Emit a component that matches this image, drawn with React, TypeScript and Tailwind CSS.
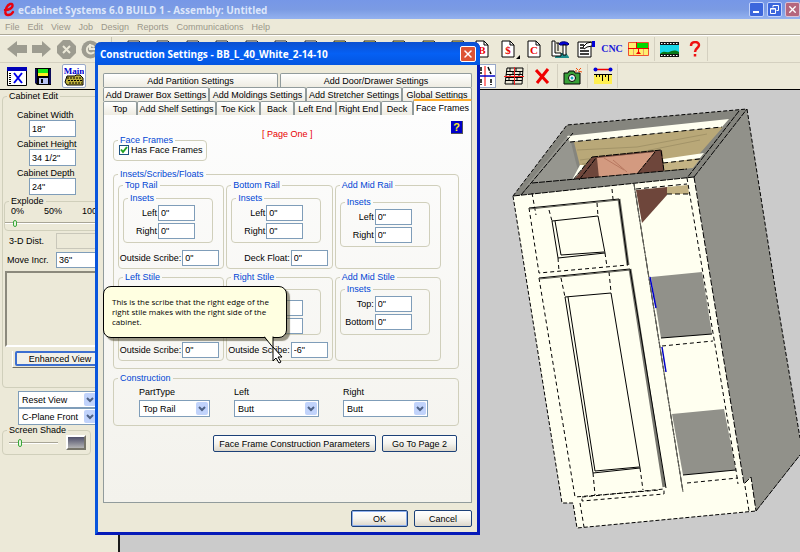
import React from 'react';
import { X } from 'lucide-react';

type GroupProps = {
  title?: string;
  className?: string;
  blue?: boolean;
  children?: React.ReactNode;
};

const Group = ({ title, className = '', blue = true, children }: GroupProps) => (
  <fieldset className={`min-w-0 rounded border border-[#d0cfbb] ${className}`}>
    {title && <legend className={`ml-1 px-0.5 leading-[10px] ${blue ? 'text-[#0046d5]' : 'text-black'}`}>{title}</legend>}
    {children}
  </fieldset>
);

type FieldProps = { label?: string; value: string; id: string; className?: string };

const Field = ({ label, value, id, className = '' }: FieldProps) => (
  <div className={`flex items-center justify-end gap-px ${className}`}>
    {label && <label htmlFor={id} className="whitespace-nowrap">{label}</label>}
    <input
      id={id}
      aria-label={label ? undefined : 'Inset'}
      defaultValue={value}
      className="h-4 w-[37px] shrink-0 border border-[#7f9db9] bg-white px-0.5 outline-none"
    />
  </div>
);

type FrameGroupProps = {
  title: string;
  id: string;
  labels?: [string, string];
  scribe?: string;
  scribeValue?: string;
  insetClass: string;
  scribeClass?: string;
};

const FrameGroup = ({ title, id, labels, scribe, scribeValue = '0"', insetClass, scribeClass = '' }: FrameGroupProps) => (
  <Group title={title} className="h-[89px]">
    <Group title={labels && 'Insets'} className={`ml-1 w-[90px] ${insetClass}`}>
      <div className="flex flex-col gap-0.5 pr-[17px] pt-0.5">
        <Field label={labels?.[0]} value={labels ? '0"' : ''} id={`${id}-a`} />
        <Field label={labels?.[1]} value={labels ? '0"' : ''} id={`${id}-b`} />
      </div>
    </Group>
    {scribe && <Field label={scribe} value={scribeValue} id={`${id}-scribe`} className={`pr-1 ${scribeClass}`} />}
  </Group>
);

type DropDownProps = { label: string; value: string; className: string; hideLabel?: boolean };

const DropDown = ({ label, value, className, hideLabel }: DropDownProps) => (
  <label className={`block ${className}`}>
    {!hideLabel && <span className="mb-[3px] block">{label}</span>}
    <span className="relative block">
      <select
        aria-label={label}
        defaultValue={value}
        className="block h-[17px] w-full appearance-none border border-[#7f9db9] bg-white px-[3px] outline-none"
      >
        <option>{value}</option>
      </select>
      <span className="pointer-events-none absolute inset-y-0.5 right-0.5 flex w-3 items-center justify-center rounded-xs bg-[#c1d3fb]">
        <svg width="8" height="6" viewBox="0 0 8 6" fill="none" stroke="#4d6185" strokeWidth="2">
          <path d="M1 1l3 3 3-3" />
        </svg>
      </span>
    </span>
  </label>
);

const PushButton = ({ className = '', children }: { className?: string; children: React.ReactNode }) => (
  <button
    type="button"
    className={`h-[17px] rounded-xs border border-[#1c4178] bg-linear-to-b from-white via-[#f5f4ef] to-[#dcd7cb] text-center ${className}`}
  >
    {children}
  </button>
);

const ToolButton = ({ label, className = '', children }: { label: string; className?: string; children: React.ReactNode }) => (
  <button type="button" aria-label={label} className={`flex h-6 shrink-0 items-center justify-center ${className}`}>
    {children}
  </button>
);

const PageIcon = ({ letter }: { letter: string }) => (
  <svg width="14" height="18" viewBox="0 0 14 18">
    <path d="M1 1h8l4 4v12H1z" fill="#fff" stroke="#000" />
    <path d="M9 1v4h4" fill="none" stroke="#000" />
    <text x="7" y="14" textAnchor="middle" fontSize="11" fontWeight="bold" fill="#e80000" fontFamily="Liberation Serif, serif">{letter}</text>
  </svg>
);

const ArrowIcon = ({ right }: { right?: boolean }) => (
  <svg width="20" height="16" viewBox="0 0 20 16" fill="#9d9c90">
    {right ? <path d="M0 4h10V0l9 8-9 8v-4H0z" /> : <path d="M20 4H10V0L0 8l10 8v-4h10z" />}
  </svg>
);

const TitleBar = () => (
  <header className="flex h-[19px] items-center bg-linear-to-b from-[#7697e7] via-[#7b9be3] to-[#94b2ef] pl-[3px]">
    <svg width="12" height="15" viewBox="0 0 12 15" fill="none" stroke="#e8000c" strokeWidth="2.4" strokeLinecap="round">
      <path d="M2 8c4 0 8-2 7.500-5C9 1 5.500 1.500 3.500 5.500 1.500 9.500 2 13 5 13c2 0 4-1 5-3" />
    </svg>
    <h1 className="ml-[3px] whitespace-nowrap font-['Open_Sans',sans-serif] text-[10px] font-bold text-[#dce6fb]">
      eCabinet Systems 6.0 BUILD 1 - Assembly: Untitled
    </h1>
    <div className="ml-auto flex gap-[3px]">
      <button type="button" aria-label="Minimize" className="flex h-[15px] w-[15px] items-end justify-start rounded-xs border border-[#c3d3fb] bg-[#3c66dc] pb-[3px] pl-[3px]">
        <span className="h-0.5 w-1.5 bg-white" />
      </button>
      <button type="button" aria-label="Restore" className="flex h-[15px] w-[15px] items-center justify-center rounded-xs border border-[#c3d3fb] bg-[#3c66dc]">
        <svg width="9" height="9" viewBox="0 0 9 9" fill="none" stroke="#fff">
          <path d="M3 2.500V.5h5.500v5H6.500M.5 3.500h5v5h-5zM.5 4h5" />
        </svg>
      </button>
      <button type="button" aria-label="Close" className="flex h-[15px] w-[15px] items-center justify-center rounded-xs border border-[#d9c3d7] bg-[#b5667d] text-white">
        <X size={11} strokeWidth={3} />
      </button>
    </div>
  </header>
);

const menus = ['File', 'Edit', 'View', 'Job', 'Design', 'Reports', 'Communications', 'Help'];

const MenuBar = () => (
  <nav className="flex h-4 items-center gap-2 border-b border-[#aca899] pl-[5px] text-[#9a978a]">
    {menus.map((m) => (
      <button type="button" key={m}>{m}</button>
    ))}
  </nav>
);

const Toolbars = () => (
  <div className="overflow-hidden border-b border-black">
    <div className="flex h-[27px] items-center border-t border-white pl-[7px]">
      <div className="flex w-[105px] shrink-0 items-center gap-[5px] overflow-hidden border-r border-[#c9c6b5]">
        <ToolButton label="Back"><ArrowIcon /></ToolButton>
        <ToolButton label="Forward"><ArrowIcon right /></ToolButton>
        <ToolButton label="Stop">
          <svg width="19" height="19" viewBox="0 0 19 19">
            <path d="M6 0h7l6 6v7l-6 6H6l-6-6V6z" fill="#9d9c90" />
            <path d="M6 6l7 7m0-7l-7 7" stroke="#ece9d8" strokeWidth="2" />
          </svg>
        </ToolButton>
        <ToolButton label="Refresh">
          <svg width="19" height="19" viewBox="0 0 19 19">
            <circle cx="9.500" cy="9.500" r="9" fill="#9d9c90" />
            <path d="M13 7a4 4 0 1 0 0 5M9 4v5h5" fill="none" stroke="#ece9d8" strokeWidth="2" />
          </svg>
        </ToolButton>
      </div>
      <div className="flex w-[362px] shrink-0 items-center justify-around pl-2">
        {['New', 'Cut', 'Open', 'Save', 'Copy', 'Print', 'Part', 'Grid', 'Wood', 'Sheet', 'List', 'Plan'].map((n, i) => (
          <ToolButton key={n} label={n}>
            <svg width="16" height="18" viewBox="0 0 16 18">
              <path d="M1 1h11l3 3v13H1z" fill={i > 6 ? '#ffef70' : '#fff'} stroke="#222" />
            </svg>
          </ToolButton>
        ))}
      </div>
      <ToolButton label="Bill of materials" className="w-4"><PageIcon letter="B" /></ToolButton>
      <ToolButton label="Pricing" className="ml-2.5 w-4"><PageIcon letter="$" /></ToolButton>
      <span className="mt-4 h-1 w-1 shrink-0 border-2 border-l-transparent border-t-transparent border-b-black border-r-black" />
      <ToolButton label="Cut list" className="ml-1.5 w-4"><PageIcon letter="C" /></ToolButton>
      <ToolButton label="Machining" className="ml-2 w-5">
        <svg width="19" height="18" viewBox="0 0 19 18">
          <path d="M4 17l3-4h8l3 4v1H4z" fill="#1c8c8c" />
          <path d="M1 1h3v12h6v3H1z" fill="#fff" stroke="#000" />
          <path d="M8 4c1-3 8-3 10 0l-1 1H9z" fill="#0000d8" stroke="#00007a" />
          <path d="M12 5h3v10h-3z" fill="#fff" stroke="#000" />
          <path d="M7 3v8M5 3h3" stroke="#000" />
        </svg>
      </ToolButton>
      <ToolButton label="Notes" className="ml-1.5 w-5">
        <svg width="19" height="18" viewBox="0 0 19 18">
          <path d="M1 2h13v15H1z" fill="#fff" stroke="#000" />
          <path d="M3 5h4M3 8h3M3 11h9M3 14h9" stroke="#000" strokeWidth="1.500" />
          <path d="M6 7l4-4 5-1v4l-5 1-3 2z" fill="#fff" stroke="#000" />
          <path d="M15 1h3v6h-3z" fill="#0000d8" />
        </svg>
      </ToolButton>
      <ToolButton label="CNC" className="ml-1 w-6">
        <span className="font-['Liberation_Serif',serif] text-[10px] font-bold text-[#1a1ad8]">CNC</span>
      </ToolButton>
      <ToolButton label="Nesting" className="ml-0.5 w-6">
        <svg width="21" height="14" viewBox="0 0 21 14">
          <path d="M.5.5h20v13H.5z" fill="#ffef70" stroke="#f05030" />
          <path d="M9 1h11v5H9z" fill="#00d800" />
          <path d="M0 6.500h21M8.500 0v6M10.500 6v5" stroke="#f00000" />
          <path d="M15.500 7v6M5.500 7v6" stroke="#f0a060" />
          <path d="M8 12l2.500-3 2.500 3z" fill="#f00000" />
        </svg>
      </ToolButton>
      <div className="ml-1 flex shrink-0 items-center border-x border-[#d4d0c0] px-1">
        <ToolButton label="Movie" className="w-5">
          <svg width="19" height="15" viewBox="0 0 19 15">
            <path d="M0 0h19v15H0z" fill="#111" />
            <path d="M0 3h19v9H0z" fill="#18d8e8" />
            <path d="M0 12c4-4 6-1 9-2s5-3 10 0v2z" fill="#087818" />
            <path d="M1 1.500h18M1 13.500h18" stroke="#fff" strokeDasharray="1.500 1.500" />
          </svg>
        </ToolButton>
        <ToolButton label="Help" className="ml-2 w-4">
          <svg width="12" height="16" viewBox="0 0 12 16" fill="none" stroke="#ee1111" strokeWidth="2.500">
            <path d="M2 5c0-5 8-5 8-1 0 3-4 3-4 7M6 13v2.500" />
          </svg>
        </ToolButton>
      </div>
    </div>
    <div className="flex h-[27px] items-center border-t border-[#d4d0c0] pl-[7px]">
      <ToolButton label="Window">
        <svg width="20" height="19" viewBox="0 0 20 19">
          <path d="M.5.5h19v18H.5z" fill="#fff" stroke="#000" />
          <path d="M0 0h20v4H0z" fill="#0000b8" />
          <path d="M3 6v11" stroke="#000" strokeDasharray="1 1" strokeWidth="2" />
          <path d="M7 6l8 10m0-10L7 16" stroke="#0000ee" strokeWidth="2" />
        </svg>
      </ToolButton>
      <ToolButton label="Save" className="ml-2">
        <svg width="16" height="17" viewBox="0 0 16 17">
          <path d="M0 0h16v17H2l-2-2z" fill="#000" />
          <path d="M3 1h10v4H3z" fill="#18e818" />
          <path d="M3 5h10v3H3z" fill="#ffee20" />
          <path d="M4 10h9v6H4z" fill="#b9c4f4" />
          <path d="M1 1v14M15 1v15" stroke="#1818b8" />
          <path d="M6 11h2v4H6z" fill="#000" />
        </svg>
      </ToolButton>
      <ToolButton label="Main" className="ml-[11px] w-6 rounded-xs border border-[#98a8c8] bg-white">
        <svg width="20" height="20" viewBox="0 0 20 20">
          <text x="10" y="8" textAnchor="middle" fontSize="9" fontWeight="bold" fill="#0000d0" fontFamily="Liberation Serif, serif">Main</text>
          <path d="M3 10h8l1-1h4l3 3v7H3l-2-3z" fill="#bcae3c" stroke="#000" />
          <path d="M3 12h14M4 14.500h14M5 17h13" stroke="#000" strokeDasharray="2 1" />
        </svg>
      </ToolButton>
      <div className="ml-1 w-[382px] shrink-0" />
      <ToolButton label="Views" className="w-6 border border-[#98a8c8] bg-white">
        <svg width="22" height="20" viewBox="0 0 22 20" stroke="#000" fill="none">
          <path d="M3 1v7M8 1v7M15 1l3 7M3 13v6M8 13v6M18 13v6" strokeWidth="1.500" strokeDasharray="4 1" />
          <path d="M12 0v20" stroke="#f00" />
          <path d="M0 10h22" stroke="#0000c8" strokeWidth="1.500" />
        </svg>
      </ToolButton>
      <ToolButton label="Wall" className="ml-1 w-7 border-r border-[#d4d0c0]">
        <svg width="20" height="18" viewBox="0 0 20 18" fill="none" stroke="#000">
          <path d="M3 1h16l-1 16H1zM2 4.500h17M2 7.500h17M2 10.500h16M1 13.500h17M6 1v3M12 1v3M16 4v3M9 4v3M6 7v3M13 10v4M5 10v3M15 7v3M9 13v4" />
          <path d="M0 9.500h20M10.500 0v18" stroke="#f02020" />
        </svg>
      </ToolButton>
      <ToolButton label="Delete" className="w-[30px] border-r border-[#d4d0c0]">
        <svg width="15" height="16" viewBox="0 0 15 16" stroke="#f00000" strokeWidth="3">
          <path d="M1 2l12 13M13 1L2 15" />
        </svg>
      </ToolButton>
      <ToolButton label="Camera" className="w-[30px] border-r border-[#d4d0c0]">
        <svg width="20" height="18" viewBox="0 0 20 18">
          <path d="M1 6h4l1-2h5l1 2h5v11H1z" fill="#38a038" stroke="#000" />
          <circle cx="9" cy="11" r="3.500" fill="#fff" stroke="#000" />
          <circle cx="9" cy="11" r="1.500" fill="#18a8b8" />
          <path d="M13 1l2 2m3-2l-2 2m-1 1l4 1M14 4h-2" stroke="#f05010" />
        </svg>
      </ToolButton>
      <ToolButton label="Dimension" className="w-[30px] border-r border-[#d4d0c0]">
        <svg width="20" height="18" viewBox="0 0 20 18">
          <path d="M2 2.500h16" stroke="#f00000" strokeWidth="1.500" />
          <circle cx="2.500" cy="2.500" r="2" fill="#0000d8" />
          <circle cx="17.500" cy="2.500" r="2" fill="#0000d8" />
          <path d="M1 7h18v10H1z" fill="#ffef50" />
          <path d="M1 7.500h18" stroke="#000" />
          <path d="M3.500 7v3M6.500 7v3M9.500 7v7M12.500 7v3M15.500 7v7" stroke="#000" />
        </svg>
      </ToolButton>
    </div>
  </div>
);

const sizes = [
  { label: 'Cabinet Width', value: '18"' },
  { label: 'Cabinet Height', value: '34 1/2"' },
  { label: 'Cabinet Depth', value: '24"' },
];

const Sidebar = () => (
  <aside className="w-[120px] shrink-0 border-r-2 border-[#1a1a1a] bg-[#ece9d8] pl-0.5 pt-px">
    <Group title="Cabinet Edit" blue={false} className="h-[297px]">
      <div className="mt-[9px] flex flex-col gap-0.5 pl-3.5">
        {sizes.map((s) => (
          <label key={s.label} className="block">
            <span className="block whitespace-nowrap">{s.label}</span>
            <input defaultValue={s.value} className="ml-3 block h-[17px] w-[47px] border border-[#7f9db9] bg-white px-0.5 outline-none" />
          </label>
        ))}
      </div>
      <Group title="Explode" blue={false} className="ml-px mt-px h-[35px]">
        <div className="flex gap-5 whitespace-nowrap pl-1.5">
          <span>0%</span>
          <span>50%</span>
          <span>100%</span>
        </div>
        <div className="relative mt-1.5 h-0.5 border-t border-[#a8a596] bg-white">
          <input type="range" aria-label="Explode" defaultValue={0} className="absolute inset-0 h-0.5 w-full opacity-0" />
          <span className="absolute -top-[3px] left-2 h-[7px] w-1 rounded-xs border border-[#38a838] bg-[#e8f4e0]" />
        </div>
      </Group>
      <div className="mt-0.5 flex items-center justify-between pl-1.5">
        <label htmlFor="dist">3-D Dist.</label>
        <input id="dist" disabled className="h-4 w-[61px] border border-[#c9c7ba] bg-[#ece9d8]" />
      </div>
      <div className="mt-[3px] flex items-center justify-between pl-1">
        <label htmlFor="incr">Move Incr.</label>
        <input id="incr" defaultValue={'36"'} className="h-4 w-[61px] border border-[#7f9db9] bg-white px-0.5 outline-none" />
      </div>
      <div className="ml-0.5 mt-[3px] h-[76px] border-2 border-b-white border-l-[#8b897c] border-r-white border-t-[#8b897c]" />
      <div className="ml-[9px] mt-1 border-b border-l border-b-[#716f64] border-l-white pb-px pl-0.5">
        <button type="button" className="block h-[15px] w-[90px] rounded-xs border-2 border-[#3c6ed0] bg-[#f2f0e8] leading-[10px]">
          Enhanced View
        </button>
      </div>
    </Group>
    <div className="mt-[3px] pl-4">
      <DropDown label="View" value="Reset View" hideLabel className="w-20" />
      <DropDown label="Plane" value="C-Plane Front" hideLabel className="w-20" />
    </div>
    <Group title="Screen Shade" blue={false} className="h-[30px] w-[89px]">
      <div className="flex items-center justify-between pl-1.5 pr-1">
        <div className="relative h-0.5 w-[49px] border-t border-[#a8a596] bg-white">
          <input type="range" aria-label="Screen Shade" defaultValue={20} className="absolute inset-0 h-0.5 w-full opacity-0" />
          <span className="absolute -top-1 left-[9px] h-2 w-1 rounded-xs border border-[#38a838] bg-[#e8f4e0]" />
        </div>
        <button type="button" aria-label="Shade colour" className="h-[15px] w-5 border-2 border-b-[#77756a] border-l-white border-r-[#77756a] border-t-white bg-linear-to-b from-[#50506a] to-[#b4b4b4]" />
      </div>
    </Group>
  </aside>
);

const CabinetView = () => (
  <main className="min-w-0 flex-1 bg-[#cbcbcb]">
    <svg viewBox="120 90 680 462" className="block w-full" role="img" aria-label="Cabinet model">
      {/* right side */}
      <path d="M694 177L747 109 778 306 800 438V455L756 511 744 484z" fill="#91918a" />
      {/* top frame and inside */}
      <path d="M513 196L567 125 747 109 694 177z" fill="#85857e" />
      <path d="M522 191L569 134 576 163 581 180z" fill="#96968f" />
      <path d="M567 136L729 119 722 127 570 142z" fill="#fffff0" />
      <path d="M574 142L723 127 694 160 664 172 580 166z" fill="#b9a878" />
      <path d="M580 160l60-8 60-12M577 150l60-3 70-13M582 164l50-5" stroke="#a39468" fill="none" />
      <path d="M580 165l4 0-7 14-5 1z" fill="#fffff0" />
      <path d="M663 159L704 153 700 158 664 163z" fill="#fffff0" />
      <path d="M664 163L700 159 693 168 664 172z" fill="#c4b384" />
      <path d="M573 181L592 157 662 150 664 172 600 179z" fill="#6e463b" />
      <path d="M597 158L655 152 637 174 599 178z" fill="#d39a80" />
      <path d="M604 158l20 12M613 160l14 12" stroke="#b87860" fill="none" />
      <path d="M513 196L532 183 697 168 694 177z" fill="#85857e" />
      {/* front */}
      <path d="M513 196L694 177 744 484 751 477 756 511 577 528 573 503H562z" fill="#fffff0" />
      <path d="M636 190L667 187 667 195 642 223z" fill="#6e463b" />
      <path d="M667 187L688 185 689 194 667 194z" fill="#c4b384" />
      <path d="M651 277L702 272 712 334 661 338z" fill="#91918a" />
      <path d="M672 414L724 409 736 470 683 475z" fill="#91918a" />
      <g fill="none" stroke="#000">
        <path d="M513 196L567 125 747 109 778 306 800 438M513 196L562 503H573L577 528 756 511" strokeDasharray="4 2" />
        <path d="M694 177L513 196M756 511L800 455M694 177L747 109M521 195L573 133M739 111L687 178M532 183l155-14M573 180L592 157M579 180L596 158M592 157L661 150 664 171M655 152L637 174" strokeDasharray="6 1" />
        <path d="M570 142L722 127M663 163L700 159M636 189L687 184M667 194H689" strokeDasharray="5 3" />
        <path d="M634 184L683 492" strokeDasharray="6 2" />
        <path d="M687 178L736 470 738 484" strokeDasharray="4 3" />
        <path d="M694 177L744 484 751 477 756 511" strokeDasharray="6 2" />
        <path d="M661 338L712 334M683 475L736 470" />
        <path d="M662 346L713 341M687 483L738 478M582 497L664 489V494L582 501zM580 503L584 527M745 486L749 511" strokeDasharray="4 3" />
      </g>
      {/* drawer front and door */}
      <g fill="none" stroke="#000">
        <path d="M619 199l9 66M630 269L664 487" stroke="#77776f" strokeWidth="3" />
        <path d="M529 208L539 273 628 265" strokeDasharray="4 3" />
        <path d="M529 208L619 199 628 265" />
        <path d="M552 221L598 216 605 253 558 258zM555 221L561 255 604 252" />
        <path d="M549 210l3 11M597 203l1 13M605 253l2 14M558 258l1 13M532 193l4 22M612 189l1 10M561 278l4 19M609 272l2 20M593 473l2 22M640 468l3 22" strokeDasharray="4 3" />
        <path d="M539 278L575 497 660 490" strokeDasharray="4 3" />
        <path d="M539 278L630 269 666 488" />
        <path d="M539 279L630 270M529 209L619 200" stroke="#55554d" />
        <path d="M565 297L611 293 640 468 593 473zM568 297L595 471 639 467" />
      </g>
      <path d="M634 184L683 492" stroke="#66665e" />
      <path d="M650 277l6 31M662 347l4 25" stroke="#0000c8" strokeWidth="1.500" />
    </svg>
  </main>
);

const Tab = ({ className = '', children }: { className?: string; children: React.ReactNode }) => (
  <button
    type="button"
    role="tab"
    className={`h-3.5 whitespace-nowrap rounded-t-xs border border-b-0 border-[#919b9c] bg-linear-to-b from-white to-[#eeece2] text-center ${className}`}
  >
    {children}
  </button>
);

const Dialog = () => (
  <section
    role="dialog"
    aria-label="Construction Settings"
    className="absolute left-[95px] top-[42px] w-[385px] rounded-t-md border-[3px] border-t-0 border-b-[#0519b8] border-l-[#0855dd] border-r-[#0519b8] bg-[#ece9d8]"
  >
    <div className="-mx-[3px] flex h-[23px] items-center justify-between rounded-t-md bg-linear-to-b from-[#0b50d0] via-[#0560f4] to-[#0355e0] pl-[5px] pr-1">
      <h2 className="whitespace-nowrap font-['Open_Sans',sans-serif] text-[10px] font-bold text-white">
        Construction Settings - BB_L_40_White_2-14-10
      </h2>
      <button type="button" aria-label="Close dialog" className="flex h-4 w-4 items-center justify-center rounded-xs border border-white bg-[#dd5434] text-white">
        <X size={12} strokeWidth={3} />
      </button>
    </div>
    <div className="px-[5px] pt-2">
      <div role="tablist">
        <div className="flex gap-0.5">
          <Tab className="w-[175px]">Add Partition Settings</Tab>
          <Tab className="flex-1">Add Door/Drawer Settings</Tab>
        </div>
        <div className="flex">
          <Tab className="w-[106px]">Add Drawer Box Settings</Tab>
          <Tab className="w-[97px]">Add Moldings Settings</Tab>
          <Tab className="w-24">Add Stretcher Settings</Tab>
          <Tab className="flex-1">Global Settings</Tab>
        </div>
        <div className="flex items-end">
          <Tab className="w-[34px]">Top</Tab>
          <Tab className="w-[79px]">Add Shelf Settings</Tab>
          <Tab className="w-11">Toe Kick</Tab>
          <Tab className="w-[34px]">Back</Tab>
          <Tab className="w-[42px]">Left End</Tab>
          <Tab className="w-[45px]">Right End</Tab>
          <Tab className="w-8">Deck</Tab>
          <button type="button" role="tab" aria-selected="true" className="-mt-0.5 h-4 flex-1 whitespace-nowrap rounded-t-xs border border-b-0 border-t-2 border-[#919b9c] border-t-[#ffae2c] bg-white">
            Face Frames
          </button>
        </div>
      </div>

      <div className="h-[388px] border border-t-0 border-[#919b9c] bg-linear-to-b from-[#fdfdfd] to-[#f3f2ec] pl-[9px] pr-3 pt-1.5">
        <div className="flex h-10 items-start">
          <Group title="Face Frames" className="h-[26px] w-[94px] self-end">
            <label className="flex items-center gap-0.5 whitespace-nowrap pl-[5px]">
              <span className="relative flex h-2.5 w-2.5">
                <input type="checkbox" defaultChecked className="peer h-2.5 w-2.5 appearance-none border border-[#1c5180] bg-white" />
                <svg className="pointer-events-none absolute inset-0 hidden peer-checked:block" width="10" height="10" viewBox="0 0 10 10" fill="none" stroke="#21a121" strokeWidth="2">
                  <path d="M2 4.500l2 2.500 4-5" />
                </svg>
              </span>
              Has Face Frames
            </label>
          </Group>
          <span className="ml-[55px] mt-2 text-[#e80000]">[ Page One ]</span>
          <button type="button" aria-label="Help topic" className="-mr-1 ml-auto h-[13px] w-3 border-b border-r border-[#555] bg-[#0000c8] text-[11px] font-bold leading-3 text-[#ffee20]">
            ?
          </button>
        </div>

        <Group title="Insets/Scribes/Floats" className="mt-2 h-[200px]">
          <div className="ml-1 mr-[17px] grid grid-cols-3 gap-x-0.5 gap-y-[3px] pt-px">
            <FrameGroup title="Top Rail" id="top-rail" labels={['Left', 'Right']} scribe="Outside Scribe:" insetClass="mt-[3px] h-[50px]" scribeClass="mt-[7px]" />
            <FrameGroup title="Bottom Rail" id="bottom-rail" labels={['Left', 'Right']} scribe="Deck Float:" insetClass="mt-[3px] h-[50px]" scribeClass="mt-[7px]" />
            <FrameGroup title="Add Mid Rail" id="mid-rail" labels={['Left', 'Right']} insetClass="mt-[7px] h-[50px]" />
            <FrameGroup title="Left Stile" id="left-stile" scribe="Outside Scribe:" insetClass="mt-[7px] h-[46px] pt-2" scribeClass="mt-[7px]" />
            <FrameGroup title="Right Stile" id="right-stile" scribe="Outside Scribe:" scribeValue={'-6"'} insetClass="mt-[7px] h-[46px] pt-2" scribeClass="mt-[7px]" />
            <FrameGroup title="Add Mid Stile" id="mid-stile" labels={['Top:', 'Bottom']} insetClass="mt-0.5 h-[51px]" />
          </div>
        </Group>

        <Group title="Construction" className="mt-1 h-[53px]">
          <div className="flex gap-6 pl-[25px] pt-1">
            <DropDown label="PartType" value="Top Rail" className="w-[71px]" />
            <DropDown label="Left" value="Butt" className="w-[85px]" />
            <DropDown label="Right" value="Butt" className="w-[85px]" />
          </div>
        </Group>

        <div className="mt-[9px] flex justify-end gap-1.5 pr-0.5">
          <PushButton className="w-[163px]">Face Frame Construction Parameters</PushButton>
          <PushButton className="w-[75px]">Go To Page 2</PushButton>
        </div>
      </div>

      <div className="flex justify-end gap-1.5 pb-[5px] pt-[7px]">
        <PushButton className="w-[57px] ring-1 ring-inset ring-[#8fb0ee]">OK</PushButton>
        <PushButton className="w-[58px]">Cancel</PushButton>
      </div>
    </div>

    {/* balloon help, points at the right stile scribe */}
    <div role="tooltip" className="absolute left-[5px] top-[244px] w-[184px] rounded-lg border border-black bg-[#ffffe1] py-2.5 pl-2 font-['Open_Sans',sans-serif] leading-[10px] shadow-[3px_3px_1px_rgba(90,85,60,0.6)]">
      <p className="whitespace-nowrap text-[8px]">
        This is the scribe that the right edge of the
        <br />
        right stile makes with the right side of the
        <br />
        cabinet.
      </p>
      <svg className="absolute left-[160px] top-full -mt-px" width="20" height="28" viewBox="0 0 20 28">
        <path d="M0 0l9 10V0z" fill="#ffffe1" />
        <path d="M0 .5l9 11V.5" fill="none" stroke="#000" />
        <path d="M9 11v14l3-3 3 5 2-1-3-5h4z" fill="#fff" stroke="#000" />
      </svg>
    </div>
  </section>
);

const App = () => (
  <div className="relative flex min-h-screen flex-col overflow-hidden bg-[#ece9d8] font-['Liberation_Sans',sans-serif] text-[9px] leading-[10px] text-black">
    <TitleBar />
    <MenuBar />
    <Toolbars />
    <div className="flex flex-1">
      <Sidebar />
      <CabinetView />
    </div>
    <Dialog />
  </div>
);

export default App;
